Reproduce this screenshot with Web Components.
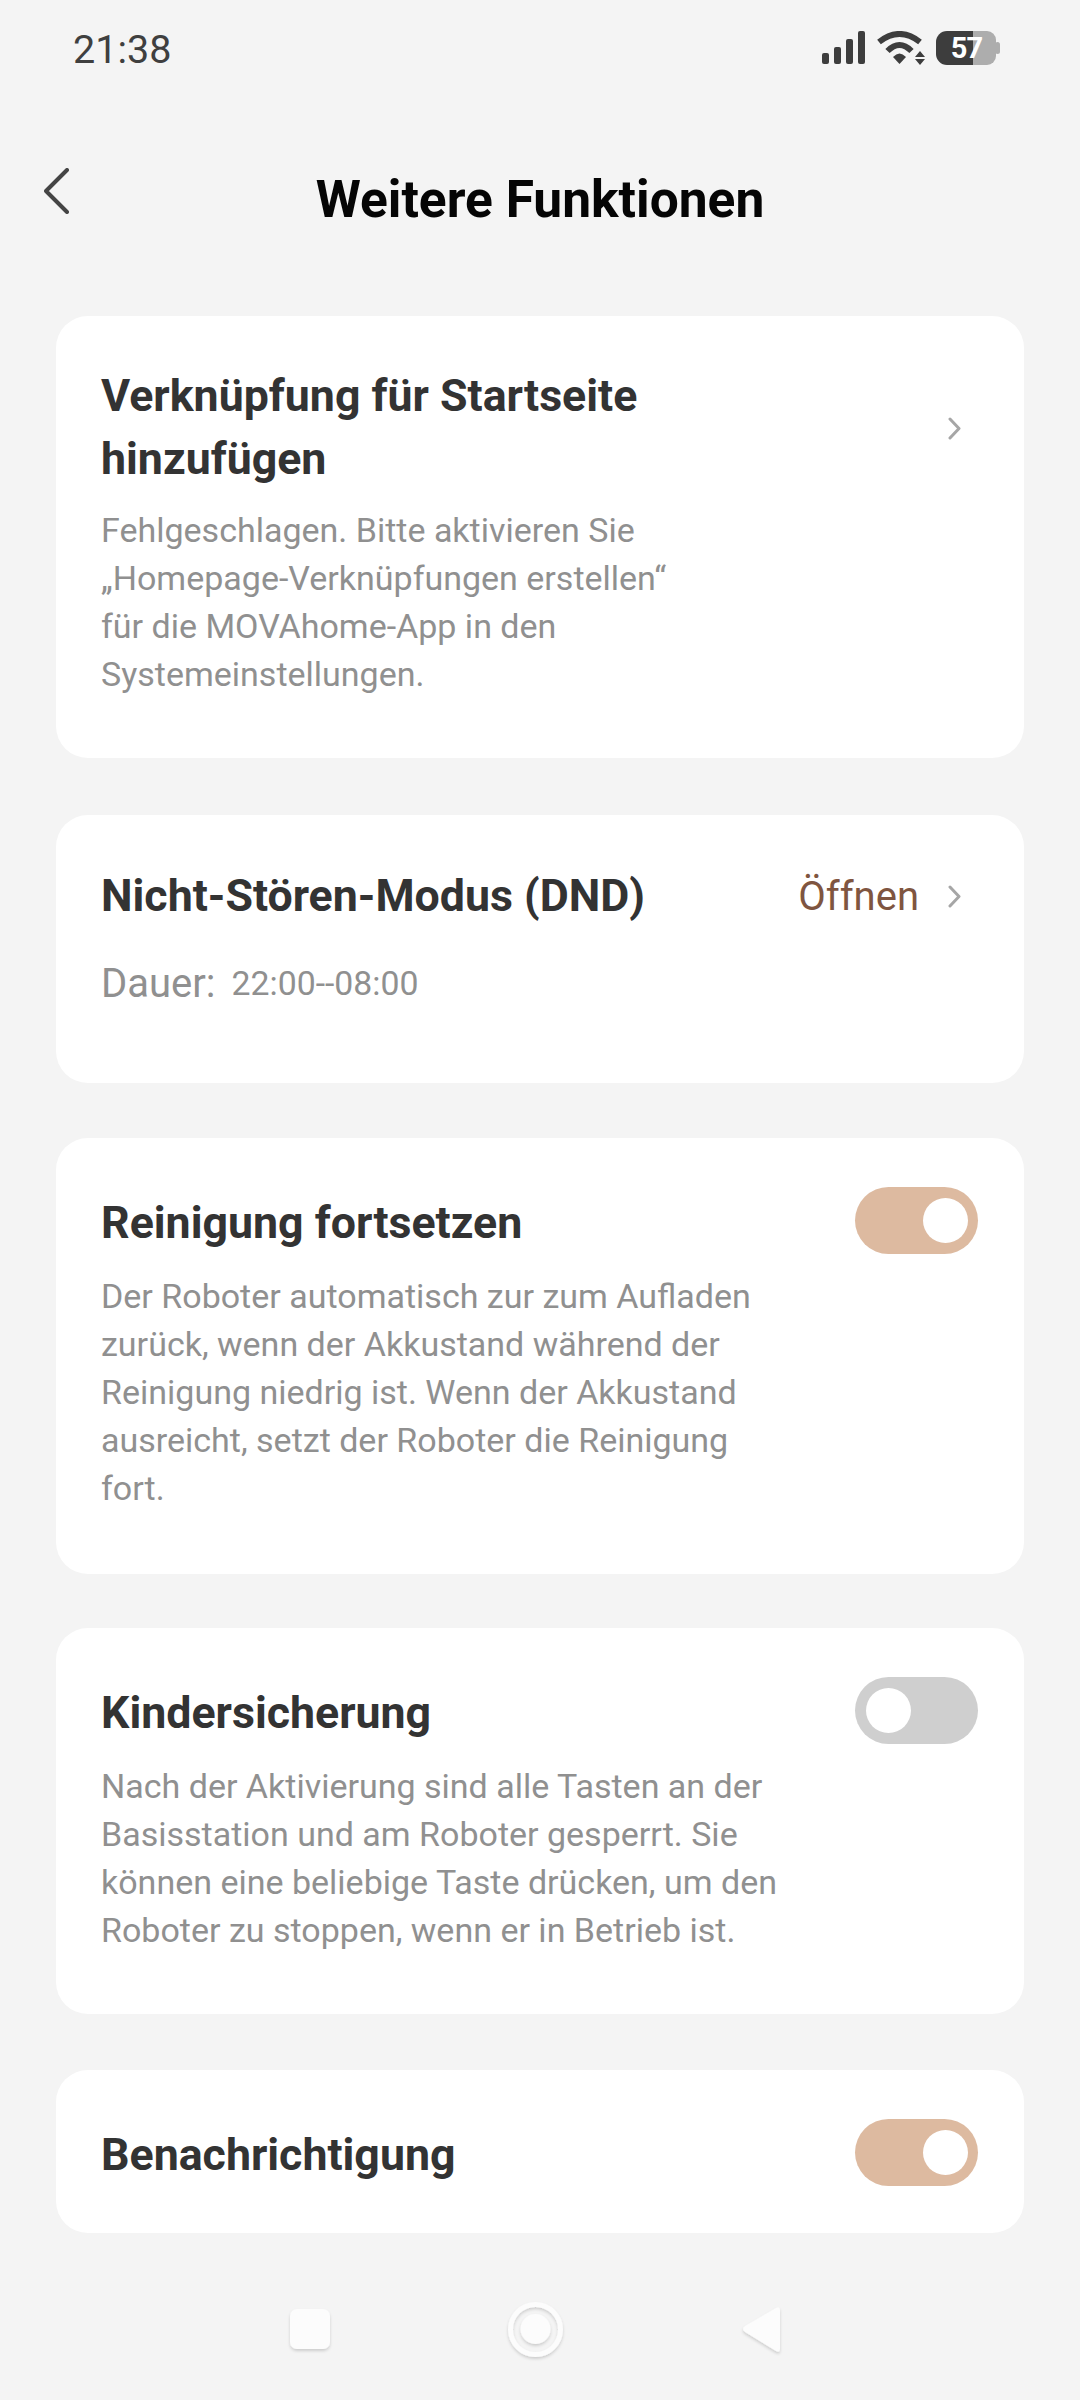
<!DOCTYPE html>
<html lang="de">
<head>
<meta charset="utf-8">
<title>Weitere Funktionen</title>
<style>
  html, body { margin: 0; height: 100%; }
  body {
    background: #f4f4f4;
    font-family: Roboto, "Noto Sans", sans-serif;
    width: 1080px;
    height: 2400px;
    overflow: hidden;
    display: flex;
    flex-direction: column;
  }
  main {
    flex: 1;
    display: flex;
    flex-direction: column;
    padding: 0 56px;
  }
</style>
</head>
<body>
<status-bar></status-bar>
<page-header>Weitere Funktionen</page-header>
<main>
  <setting-card style="height:442px;--pad:49px">
    <card-title slot="title">Verknüpfung für Startseite<br>hinzufügen</card-title>
    <chevron-icon slot="action"></chevron-icon>
    <card-desc style="margin-top:15px">Fehlgeschlagen. Bitte aktivieren Sie<br>„Homepage-Verknüpfungen erstellen“<br>für die MOVAhome-App in den<br>Systemeinstellungen.</card-desc>
  </setting-card>
  <setting-card style="height:268px;margin-top:57px;--pad:50px">
    <card-title slot="title">Nicht-Stören-Modus (DND)</card-title>
    <span slot="action" class="open">Öffnen</span>
    <chevron-icon slot="action"></chevron-icon>
    <dnd-duration></dnd-duration>
  </setting-card>
  <setting-card style="height:436px;margin-top:55px">
    <card-title slot="title" style="margin-top:5px">Reinigung fortsetzen</card-title>
    <toggle-switch slot="action" on></toggle-switch>
    <card-desc style="margin-top:17px">Der Roboter automatisch zur zum Aufladen<br>zurück, wenn der Akkustand während der<br>Reinigung niedrig ist. Wenn der Akkustand<br>ausreicht, setzt der Roboter die Reinigung<br>fort.</card-desc>
  </setting-card>
  <setting-card style="height:386px;margin-top:54px">
    <card-title slot="title" style="margin-top:5px">Kindersicherung</card-title>
    <toggle-switch slot="action"></toggle-switch>
    <card-desc style="margin-top:17px">Nach der Aktivierung sind alle Tasten an der<br>Basisstation und am Roboter gesperrt. Sie<br>können eine beliebige Taste drücken, um den<br>Roboter zu stoppen, wenn er in Betrieb ist.</card-desc>
  </setting-card>
  <setting-card style="height:163px;margin-top:56px">
    <card-title slot="title" style="margin-top:5px">Benachrichtigung</card-title>
    <toggle-switch slot="action" on></toggle-switch>
  </setting-card>
</main>
<nav-bar></nav-bar>

<script>
class StatusBar extends HTMLElement {
  constructor() {
    super();
    this.attachShadow({ mode: "open" });
    this.shadowRoot.innerHTML = `
      <style>
        :host { display: flex; align-items: center; justify-content: space-between; height: 96px; padding: 0 80px 0 73px; box-sizing: border-box; flex: none; }
        .time { font-size: 39.5px; color: #3f3f3f; padding-top: 3px; }
        .icons { display: flex; align-items: center; }
        svg { display: block; }
        .battery { position: relative; width: 64px; height: 36px; margin-left: 11px; }
        .battery span { position: absolute; left: 0; width: 61px; top: 0; text-align: center; font-size: 29px; font-weight: 700; letter-spacing: -1px; line-height: 36px; color: #fff; }
      </style>
      <div class="time">21:38</div>
      <div class="icons">
        <svg width="44" height="34" viewBox="0 0 44 34" fill="#3d3d3d">
          <rect x="0" y="22" width="7" height="11" rx="2"/>
          <rect x="12" y="16" width="7" height="17" rx="2"/>
          <rect x="24" y="8" width="7" height="25" rx="2"/>
          <rect x="36" y="0" width="7" height="33" rx="2"/>
        </svg>
        <svg width="48" height="34" viewBox="0 0 48 34" style="margin-left:11px" fill="none" stroke="#3d3d3d" stroke-width="6">
          <path d="M2 11 Q22.500 -5 43 11"/>
          <path d="M10.500 20 Q22.500 8 34.500 20"/>
          <path d="M16 26 Q22.500 19 29 26 L22.500 33Z" fill="#3d3d3d" stroke="none"/>
          <path d="M38 26 L43 20 L48 26Z M38 28 L48 28 L43 34Z" fill="#3d3d3d" stroke="none"/>
        </svg>
        <div class="battery">
          <svg width="64" height="36" viewBox="0 0 64 36">
            <path d="M37 1 H51 a9 9 0 0 1 9 9 V26 a9 9 0 0 1 -9 9 H37Z" fill="#adadad"/>
            <rect x="59" y="12" width="5" height="12" rx="2.500" fill="#adadad"/>
            <path d="M37 1 H11 a11 11 0 0 0 -11 11 V24 a11 11 0 0 0 11 11 H37Z" fill="#3d3d3d"/>
          </svg>
          <span>57</span>
        </div>
      </div>`;
  }
}

class PageHeader extends HTMLElement {
  constructor() {
    super();
    this.attachShadow({ mode: "open" });
    this.shadowRoot.innerHTML = `
      <style>
        :host { display: block; position: relative; height: 220px; box-sizing: border-box; padding-top: 74px; text-align: center; flex: none; }
        .title { font-size: 51.5px; font-weight: 700; color: #050505; line-height: 60px; }
        svg { position: absolute; left: 44px; top: 72px; }
      </style>
      <svg width="26" height="46" viewBox="0 0 26 46" fill="none" stroke="#444" stroke-width="4" stroke-linecap="round" stroke-linejoin="round">
        <path d="M23 2 L2 23 L23 44"/>
      </svg>
      <div class="title"><slot></slot></div>`;
  }
}

class SettingCard extends HTMLElement {
  constructor() {
    super();
    this.attachShadow({ mode: "open" });
    this.shadowRoot.innerHTML = `
      <style>
        :host { display: block; box-sizing: border-box; background: #fff; border-radius: 32px; padding: var(--pad, 49px) 46px 0 45px; flex: none; }
        .top { display: flex; justify-content: space-between; align-items: center; }
        .action { display: flex; align-items: center; }
        ::slotted(.open) { margin-right: 29px; font-size: 40px; color: #7f5540; }
      </style>
      <div class="top">
        <slot name="title"></slot>
        <div class="action"><slot name="action"></slot></div>
      </div>
      <slot></slot>`;
  }
}

class CardTitle extends HTMLElement {
  constructor() {
    super();
    this.attachShadow({ mode: "open" });
    this.shadowRoot.innerHTML = `
      <style>:host { display: block; font-size: 44.7px; font-weight: 700; line-height: 63px; color: #333; }</style>
      <slot></slot>`;
  }
}

class CardDesc extends HTMLElement {
  constructor() {
    super();
    this.attachShadow({ mode: "open" });
    this.shadowRoot.innerHTML = `
      <style>:host { display: block; font-size: 34px; line-height: 48px; color: #909090; margin-top: 16px; }</style>
      <slot></slot>`;
  }
}

class DndDuration extends HTMLElement {
  constructor() {
    super();
    this.attachShadow({ mode: "open" });
    this.shadowRoot.innerHTML = `
      <style>
        :host { display: flex; align-items: center; gap: 16px; margin-top: 32px; color: #909090; }
        .label { font-size: 40px; }
        .value { font-size: 33.8px; }
      </style>
      <span class="label">Dauer:</span><span class="value">22:00--08:00</span>`;
  }
}

class ChevronIcon extends HTMLElement {
  constructor() {
    super();
    this.attachShadow({ mode: "open" });
    this.shadowRoot.innerHTML = `
      <style>:host { display: block; width: 13px; height: 23px; margin-right: 17px; } svg { display: block; }</style>
      <svg width="13" height="23" viewBox="0 0 13 23" fill="none" stroke="#a6a6a6" stroke-width="3" stroke-linecap="round" stroke-linejoin="round">
        <path d="M2 2 L11 11.500 L2 21"/>
      </svg>`;
  }
}

class ToggleSwitch extends HTMLElement {
  constructor() {
    super();
    this.attachShadow({ mode: "open" });
    this.shadowRoot.innerHTML = `
      <style>
        :host { display: block; width: 123px; height: 67px; margin-bottom: 1px; border-radius: 34px; background: #cfcfcf; position: relative; }
        :host([on]) { background: #ddbaa0; }
        i { position: absolute; top: 11px; left: 11px; width: 45px; height: 45px; border-radius: 50%; background: #fff; }
        :host([on]) i { left: auto; right: 10px; }
      </style>
      <i></i>`;
  }
}

class NavBar extends HTMLElement {
  constructor() {
    super();
    this.attachShadow({ mode: "open" });
    this.shadowRoot.innerHTML = `
      <style>
        :host { display: block; height: 140px; flex: none; }
        svg { display: block; }
      </style>
      <svg width="1080" height="140" viewBox="0 0 1080 140">
        <defs>
          <filter id="s" x="-30%" y="-30%" width="160%" height="160%">
            <feDropShadow dx="0" dy="2" stdDeviation="1.500" flood-color="#000" flood-opacity=".16"/>
          </filter>
        </defs>
        <rect x="290" y="49" width="40" height="40" rx="7" fill="#fcfcfc" filter="url(#s)"/>
        <circle cx="535.500" cy="69.500" r="25" fill="none" stroke="#fcfcfc" stroke-width="5" filter="url(#s)"/>
        <circle cx="535.500" cy="69" r="15" fill="#fcfcfc" filter="url(#s)"/>
        <path d="M745 66 L776 48 Q780 46 780 50 V89 Q780 93 776 91 L745 72 Q741 69 745 66Z" fill="#fcfcfc" filter="url(#s)"/>
      </svg>`;
  }
}

customElements.define("status-bar", StatusBar);
customElements.define("page-header", PageHeader);
customElements.define("setting-card", SettingCard);
customElements.define("card-title", CardTitle);
customElements.define("card-desc", CardDesc);
customElements.define("dnd-duration", DndDuration);
customElements.define("chevron-icon", ChevronIcon);
customElements.define("toggle-switch", ToggleSwitch);
customElements.define("nav-bar", NavBar);
</script>
</body>
</html>
